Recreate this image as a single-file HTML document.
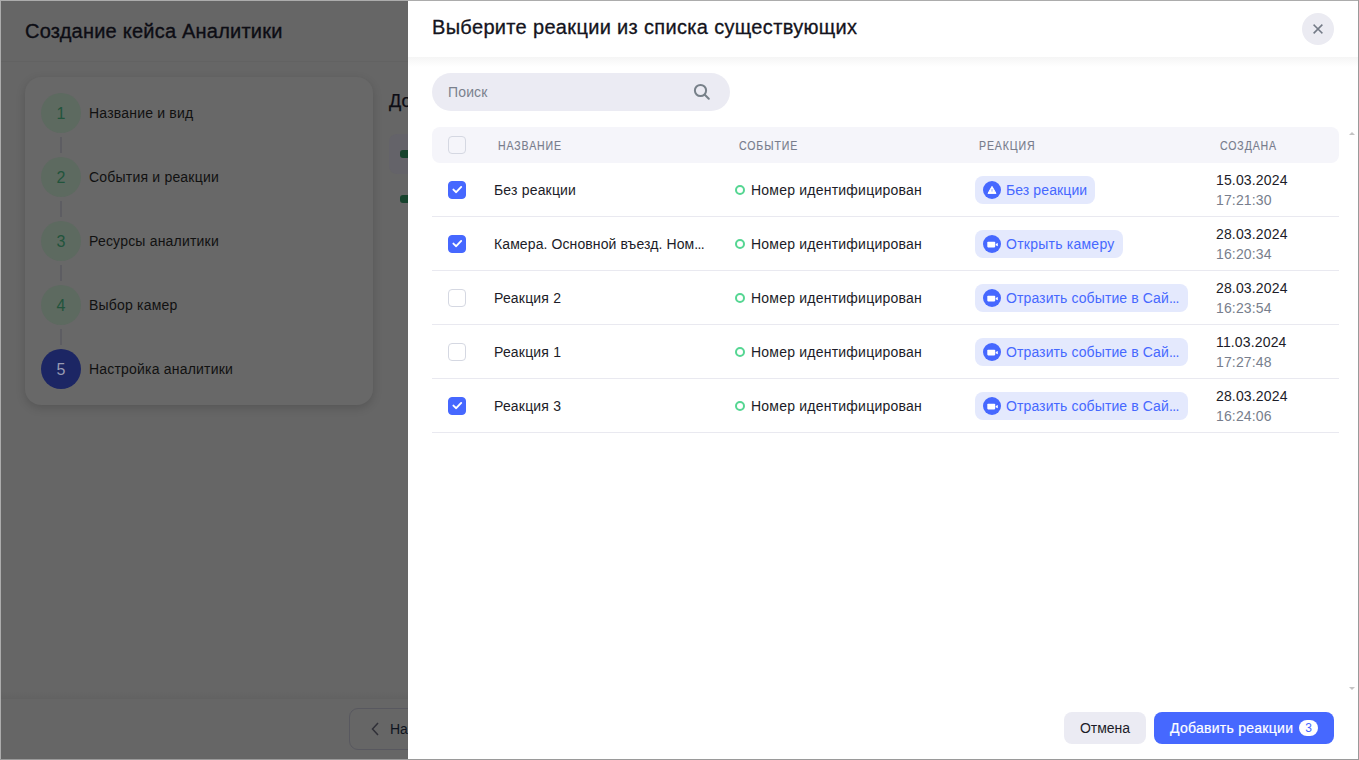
<!DOCTYPE html>
<html><head><meta charset="utf-8">
<style>
*{box-sizing:border-box;margin:0;padding:0}
html,body{width:1359px;height:760px;overflow:hidden;background:#666}
body{position:relative;font-family:"Liberation Sans",sans-serif}
.abs{position:absolute}
.frame-t{left:0;top:0;width:1359px;height:1px;background:#acacac}
.frame-l{left:0;top:0;width:1px;height:760px;background:#acacac}
.frame-r{right:0;top:0;width:1px;height:760px;background:#9a9a9a}
.frame-b{left:0;bottom:0;width:1359px;height:1px;background:#9a9a9a}
/* background app */
.bg-title{left:25px;top:19px;font-size:20px;line-height:24px;color:#0d0d14;white-space:nowrap;letter-spacing:0.22px;-webkit-text-stroke:0.35px #0d0d14}
.bg-hline{left:1px;top:61px;width:407px;height:1px;background:#626262}
.card{left:25px;top:77px;width:348px;height:328px;border-radius:16px;background:#686868;box-shadow:0 3px 10px rgba(0,0,0,0.16)}
.step{left:41px;width:40px;height:40px;border-radius:50%;background:#5d6a60;color:#22543c;font-size:16px;line-height:42px;text-align:center}
.step.act{background:#1c2664;color:#989ab2}
.slabel{left:89px;font-size:14px;line-height:16px;color:#111;white-space:nowrap;letter-spacing:0.2px}
.sline{left:60px;width:2px;height:16px;background:#5d5d62}
.bg-h2{left:389px;top:91px;font-size:18px;line-height:20px;color:#0d0d14;-webkit-text-stroke:0.25px #0d0d14}
.bg-box{left:389px;top:134px;width:19px;height:40px;border-radius:8px 0 0 8px;background:#646369}
.gbar{left:400px;width:8px;height:8px;border-radius:3px 0 0 3px;background:#17432d}
.bg-fline{left:1px;top:698px;width:407px;height:1px;background:#626262}
.bg-btn{left:349px;top:708px;width:70px;height:42px;border:1px solid #58585f;border-radius:9px}
.bg-btxt{left:390px;top:721px;font-size:14px;line-height:16px;color:#0e1420;white-space:nowrap}
/* modal */
.modal{left:408px;top:1px;width:950px;height:758px;background:#fff;overflow:hidden}

.m-title{left:432px;top:15px;font-size:20px;line-height:24px;color:#141420;white-space:nowrap;letter-spacing:0.33px;-webkit-text-stroke:0.3px #141420}
.m-hshadow{left:408px;top:57px;width:950px;height:10px;background:linear-gradient(#f5f5f5,rgba(255,255,255,0))}
.m-close{left:1302px;top:13px;width:32px;height:32px;border-radius:50%;background:#ebebf2}
.search{left:432px;top:73px;width:298px;height:38px;border-radius:19px;background:#ebebf3}
.search-ph{left:448px;top:84px;font-size:14px;line-height:16px;color:#7a818d;white-space:nowrap;letter-spacing:0.15px}
.thead{left:432px;top:127px;width:907px;height:36px;border-radius:8px;background:#f5f5fa}
.th{top:140px;font-size:12px;line-height:12px;color:#787d8d;white-space:nowrap;letter-spacing:1px;transform:scaleX(0.88);transform-origin:0 0;-webkit-text-stroke:0.15px #787d8d}
.cb{left:448px;width:18px;height:18px;border-radius:4px;border:1px solid #d5d8e2;background:#fff}
.cb.on{background:#4668ff;border-color:#4668ff}
.rline{left:432px;width:907px;height:1px;background:#e9e9f0}
.tname{left:494px;font-size:14px;line-height:16px;color:#1c1c28;white-space:nowrap;letter-spacing:0.18px}
.ev{left:735px;width:10px;height:10px;border-radius:50%;border:2px solid #55d692}
.evt{left:751px;font-size:14px;line-height:16px;color:#1c1c28;white-space:nowrap;letter-spacing:0.22px}
.chip{left:975px;height:28px;border-radius:8px;background:#e4e9fd;color:#4668ff;font-size:14px;line-height:28px;white-space:nowrap;padding-left:31px;padding-right:8px}
.chip .ic{position:absolute;left:8px;top:5px;width:18px;height:18px;border-radius:50%;background:#4668ff}
.date{left:1216px;font-size:14px;line-height:20px;color:#1c1c28;white-space:nowrap;letter-spacing:0.15px}
.date span{color:#787e8c}
.btn-c{left:1064px;top:712px;width:82px;height:32px;border-radius:8px;background:#ebebf3;color:#1c1c28;font-size:14px;line-height:32px;text-align:center}
.btn-a{left:1154px;top:712px;width:180px;height:32px;border-radius:8px;background:#4668ff;color:#fff;font-size:14px;line-height:32px;padding-left:16px;white-space:nowrap;letter-spacing:0.27px;-webkit-text-stroke:0.2px #fff}
.badge{left:1299px;top:720px;width:19px;height:16px;border-radius:8px;background:#fff;color:#4668ff;font-size:12px;line-height:17px;text-align:center}
.sarrow{left:1349px;width:0;height:0;border-left:3px solid transparent;border-right:3px solid transparent}
</style></head><body>
<div class="abs bg-title">Создание кейса Аналитики</div>
<div class="abs bg-hline"></div>
<div class="abs card"></div>
<div class="abs step" style="top:93px">1</div>
<div class="abs slabel" style="top:105px">Название и вид</div>
<div class="abs sline" style="top:137px"></div>
<div class="abs step" style="top:157px">2</div>
<div class="abs slabel" style="top:169px">События и реакции</div>
<div class="abs sline" style="top:201px"></div>
<div class="abs step" style="top:221px">3</div>
<div class="abs slabel" style="top:233px">Ресурсы аналитики</div>
<div class="abs sline" style="top:265px"></div>
<div class="abs step" style="top:285px">4</div>
<div class="abs slabel" style="top:297px">Выбор камер</div>
<div class="abs sline" style="top:329px"></div>
<div class="abs step act" style="top:349px">5</div>
<div class="abs slabel" style="top:361px">Настройка аналитики</div>
<div class="abs bg-h2">До</div>
<div class="abs bg-box"></div>
<div class="abs gbar" style="top:150px"></div>
<div class="abs gbar" style="top:195px"></div>
<div class="abs" style="left:1px;top:691px;width:407px;height:7px;background:linear-gradient(rgba(0,0,0,0),rgba(0,0,0,0.035))"></div>
<div class="abs bg-fline"></div>
<div class="abs bg-btn"></div>
<svg class="abs" style="left:370px;top:721px" width="10" height="16" viewBox="0 0 10 16"><path d="M8 2 L2.5 8 L8 14" fill="none" stroke="#303038" stroke-width="1.5"/></svg>
<div class="abs bg-btxt">На</div>

<div class="abs modal"></div>
<div class="abs m-hshadow"></div>
<div class="abs m-title">Выберите реакции из списка существующих</div>
<div class="abs m-close"><svg class="abs" style="left:9px;top:9px" width="14" height="14" viewBox="0 0 14 14"><path d="M3.2 3.2 L10.8 10.8 M10.8 3.2 L3.2 10.8" stroke="#737a86" stroke-width="1.6" stroke-linecap="square"/></svg></div>
<div class="abs search"></div><div class="abs search-ph">Поиск</div>
<svg class="abs" style="left:693px;top:83px" width="18" height="18" viewBox="0 0 18 18"><circle cx="7.5" cy="7.5" r="5.6" fill="none" stroke="#778089" stroke-width="2"/><path d="M11.8 11.8 L15.8 15.8" stroke="#778089" stroke-width="2" stroke-linecap="round"/></svg>
<div class="abs thead"></div>
<div class="abs cb" style="top:136px;background:transparent"></div>
<div class="abs th" style="left:498px">НАЗВАНИЕ</div>
<div class="abs th" style="left:739px">СОБЫТИЕ</div>
<div class="abs th" style="left:979px">РЕАКЦИЯ</div>
<div class="abs th" style="left:1220px">СОЗДАНА</div>
<div class="abs cb on" style="top:181px"><svg class="abs" style="left:3px;top:4px;overflow:visible" width="10" height="8" viewBox="0 0 10 8"><path d="M1.4 3.6 L4.2 6.2 L9.2 0.9" fill="none" stroke="#fff" stroke-width="1.9" stroke-linecap="round" stroke-linejoin="round"/></svg></div>
<div class="abs tname" style="top:182px">Без реакции</div>
<div class="abs ev" style="top:185px"></div>
<div class="abs evt" style="top:182px">Номер идентифицирован</div>
<div class="abs chip" style="top:176px;width:120px;letter-spacing:0.1px"><div class="ic"><svg class="abs" style="left:3px;top:3px" width="12" height="12" viewBox="0 0 12 12"><path d="M6 2.4 L10 9.4 L2 9.4 Z" fill="#fff" stroke="#fff" stroke-width="1" stroke-linejoin="round"/><rect x="5.45" y="5" width="1.1" height="2.6" fill="#9fb0ff"/></svg></div>Без реакции</div>
<div class="abs date" style="top:170px">15.03.2024<br><span>17:21:30</span></div>
<div class="abs rline" style="top:216px"></div>
<div class="abs cb on" style="top:235px"><svg class="abs" style="left:3px;top:4px;overflow:visible" width="10" height="8" viewBox="0 0 10 8"><path d="M1.4 3.6 L4.2 6.2 L9.2 0.9" fill="none" stroke="#fff" stroke-width="1.9" stroke-linecap="round" stroke-linejoin="round"/></svg></div>
<div class="abs tname" style="top:236px;letter-spacing:0.1px">Камера. Основной въезд. Ном<span style="letter-spacing:-0.6px">...</span></div>
<div class="abs ev" style="top:239px"></div>
<div class="abs evt" style="top:236px">Номер идентифицирован</div>
<div class="abs chip" style="top:230px;width:148px;letter-spacing:0.24px"><div class="ic"><svg class="abs" style="left:3px;top:3px" width="12" height="12" viewBox="0 0 12 12"><rect x="1.3" y="3.8" width="7.9" height="5.6" rx="0.8" fill="#fff"/><path d="M9.7 6 L11.8 4.9 L11.8 8.3 L9.7 7.2 Z" fill="#fff"/></svg></div>Открыть камеру</div>
<div class="abs date" style="top:224px">28.03.2024<br><span>16:20:34</span></div>
<div class="abs rline" style="top:270px"></div>
<div class="abs cb" style="top:289px"></div>
<div class="abs tname" style="top:290px">Реакция 2</div>
<div class="abs ev" style="top:293px"></div>
<div class="abs evt" style="top:290px">Номер идентифицирован</div>
<div class="abs chip" style="top:284px;width:213px;letter-spacing:0.1px"><div class="ic"><svg class="abs" style="left:3px;top:3px" width="12" height="12" viewBox="0 0 12 12"><rect x="1.3" y="3.8" width="7.9" height="5.6" rx="0.8" fill="#fff"/><path d="M9.7 6 L11.8 4.9 L11.8 8.3 L9.7 7.2 Z" fill="#fff"/></svg></div>Отразить событие в Сай<span style="letter-spacing:-0.6px">...</span></div>
<div class="abs date" style="top:278px">28.03.2024<br><span>16:23:54</span></div>
<div class="abs rline" style="top:324px"></div>
<div class="abs cb" style="top:343px"></div>
<div class="abs tname" style="top:344px">Реакция 1</div>
<div class="abs ev" style="top:347px"></div>
<div class="abs evt" style="top:344px">Номер идентифицирован</div>
<div class="abs chip" style="top:338px;width:213px;letter-spacing:0.1px"><div class="ic"><svg class="abs" style="left:3px;top:3px" width="12" height="12" viewBox="0 0 12 12"><rect x="1.3" y="3.8" width="7.9" height="5.6" rx="0.8" fill="#fff"/><path d="M9.7 6 L11.8 4.9 L11.8 8.3 L9.7 7.2 Z" fill="#fff"/></svg></div>Отразить событие в Сай<span style="letter-spacing:-0.6px">...</span></div>
<div class="abs date" style="top:332px">11.03.2024<br><span>17:27:48</span></div>
<div class="abs rline" style="top:378px"></div>
<div class="abs cb on" style="top:397px"><svg class="abs" style="left:3px;top:4px;overflow:visible" width="10" height="8" viewBox="0 0 10 8"><path d="M1.4 3.6 L4.2 6.2 L9.2 0.9" fill="none" stroke="#fff" stroke-width="1.9" stroke-linecap="round" stroke-linejoin="round"/></svg></div>
<div class="abs tname" style="top:398px">Реакция 3</div>
<div class="abs ev" style="top:401px"></div>
<div class="abs evt" style="top:398px">Номер идентифицирован</div>
<div class="abs chip" style="top:392px;width:213px;letter-spacing:0.1px"><div class="ic"><svg class="abs" style="left:3px;top:3px" width="12" height="12" viewBox="0 0 12 12"><rect x="1.3" y="3.8" width="7.9" height="5.6" rx="0.8" fill="#fff"/><path d="M9.7 6 L11.8 4.9 L11.8 8.3 L9.7 7.2 Z" fill="#fff"/></svg></div>Отразить событие в Сай<span style="letter-spacing:-0.6px">...</span></div>
<div class="abs date" style="top:386px">28.03.2024<br><span>16:24:06</span></div>
<div class="abs rline" style="top:432px"></div>
<div class="abs sarrow" style="top:132px;border-bottom:3px solid #c4c4c4"></div>
<div class="abs sarrow" style="top:687px;border-top:3px solid #c4c4c4"></div>
<div class="abs btn-c">Отмена</div>
<div class="abs btn-a">Добавить реакции</div>
<div class="abs badge">3</div>

<div class="abs frame-t"></div>
<div class="abs frame-l"></div>
<div class="abs frame-r"></div>
<div class="abs frame-b"></div>
</body></html>
